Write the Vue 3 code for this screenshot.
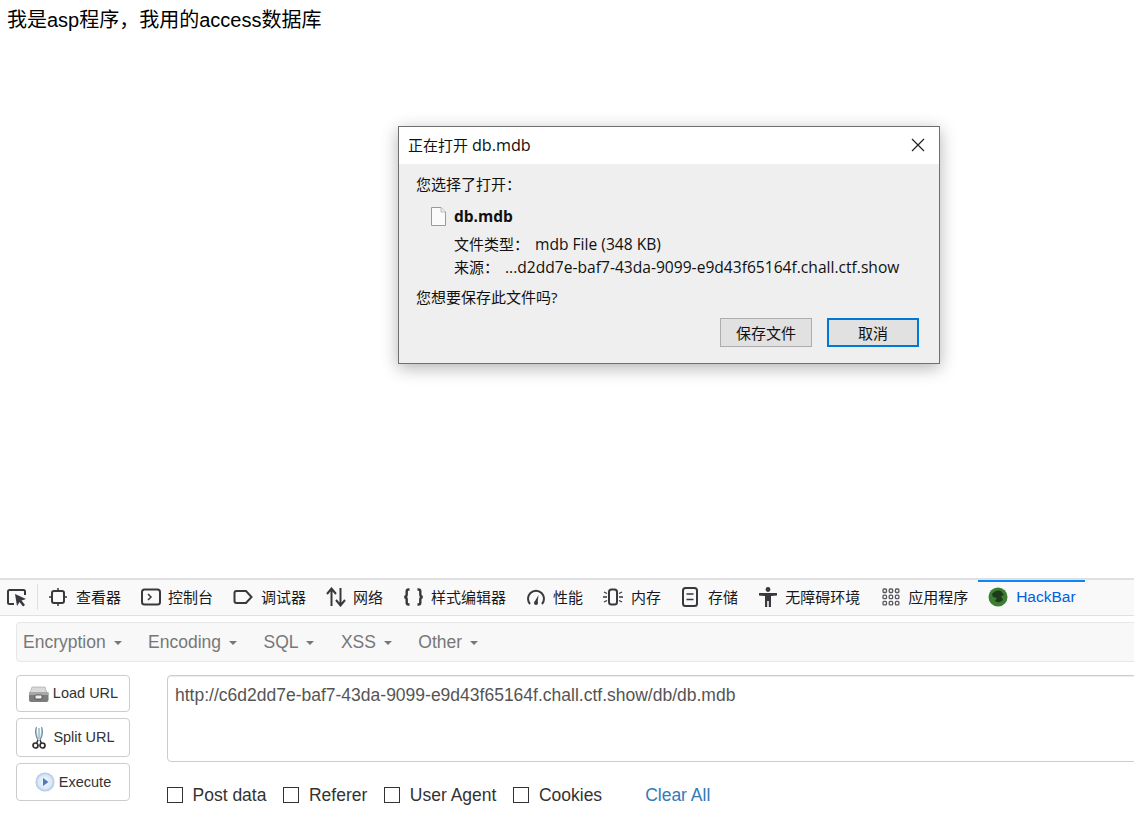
<script setup>
const menus = ['Encryption', 'Encoding', 'SQL', 'XSS', 'Other']
const checks = ['Post data', 'Referer', 'User Agent', 'Cookies']
</script>

<template>
  <div class="root">
    <main class="page">
      <p class="msg">我是asp程序，我用的access数据库</p>
      <section class="dialog">
        <header class="dlg-title">
          <span>正在打开 <span class="lat">db.mdb</span></span>
          <svg class="close" width="14" height="14" viewBox="0 0 14 14"><path d="M1 1L13 13M13 1L1 13" stroke="#222" stroke-width="1.2" fill="none"/></svg>
        </header>
        <div class="dlg-body">
          <div class="dlg-line">您选择了打开：</div>
          <div class="file-row">
            <svg class="file-ico" width="15" height="19" viewBox="0 0 15 19"><path d="M.5.5H10L14.500 5V18.500H.5Z" fill="#fafafa" stroke="#9a9a9a"/><path d="M10 .5V5H14.500" fill="#eee" stroke="#bbb"/></svg>
            <b>db.mdb</b>
          </div>
          <div class="meta"><span class="k1">文件类型：</span><span class="lat">mdb File (348 KB)</span></div>
          <div class="meta"><span class="k2">来源：</span><span class="lat">...d2dd7e-baf7-43da-9099-e9d43f65164f.chall.ctf.show</span></div>
          <div class="dlg-line ask">您想要保存此文件吗?</div>
          <div class="dlg-btns">
            <button class="dbtn">保存文件</button>
            <button class="dbtn primary">取消</button>
          </div>
        </div>
      </section>
    </main>

    <section class="devtools">
      <nav class="toolbar">
        <svg class="pick" width="22" height="20" viewBox="0 0 22 20"><path d="M8 17H3.500Q2 17 2 15.500V4.500Q2 3 3.500 3H17.500Q19 3 19 4.500V8" fill="none" stroke="#38383d" stroke-width="2"/><path d="M9 7L20 12L15.500 13.500L19 18L17 19.500L13.500 15L11 19Z" fill="#38383d"/></svg>
        <i class="sep"></i>
        <div class="tab t1">
          <svg width="18" height="18" viewBox="0 0 18 18"><rect x="3" y="3" width="12" height="12" rx="2" fill="none" stroke="#38383d" stroke-width="2"/><path d="M9 0V3M9 15V18M0 9H3M15 9H18" stroke="#38383d" stroke-width="1.500"/></svg>
          <span>查看器</span>
        </div>
        <div class="tab t2">
          <svg width="20" height="18" viewBox="0 0 20 18"><rect x="1" y="1.500" width="18" height="15" rx="2.500" fill="none" stroke="#38383d" stroke-width="2"/><path d="M7 6L10 9L7 12" fill="none" stroke="#38383d" stroke-width="1.500"/></svg>
          <span>控制台</span>
        </div>
        <div class="tab t3">
          <svg width="20" height="16" viewBox="0 0 20 16"><path d="M3.500 2H13L18.500 8L13 14H3.500Q1.500 14 1.500 12V4Q1.500 2 3.500 2Z" fill="none" stroke="#38383d" stroke-width="2"/></svg>
          <span>调试器</span>
        </div>
        <div class="tab t4">
          <svg width="20" height="20" viewBox="0 0 20 20"><path d="M5.500 19V2M1 7L5.500 1.500L10 7M14.500 1V18M10 13L14.500 18.500L19 13" fill="none" stroke="#38383d" stroke-width="2"/></svg>
          <span>网络</span>
        </div>
        <div class="tab t5">
          <svg width="21" height="18" viewBox="0 0 21 18"><path d="M6.500 1.500H5.500Q3.700 1.500 3.700 3.500V6.500Q3.700 8.500 1.500 9Q3.700 9.500 3.700 11.500V14.500Q3.700 16.500 5.500 16.500H6.500M14.500 1.500H15.500Q17.300 1.500 17.300 3.500V6.500Q17.300 8.500 19.500 9Q17.300 9.500 17.300 11.500V14.500Q17.300 16.500 15.500 16.500H14.500" fill="none" stroke="#38383d" stroke-width="2.400"/></svg>
          <span>样式编辑器</span>
        </div>
        <div class="tab t6">
          <svg width="20" height="18" viewBox="0 0 20 18"><path d="M4 16A8 8 0 1 1 16 16" fill="none" stroke="#38383d" stroke-width="2"/><path d="M8.500 14L12.500 7L11.500 15Z" fill="#38383d"/><circle cx="10" cy="15" r="2" fill="#38383d"/></svg>
          <span>性能</span>
        </div>
        <div class="tab t7">
          <svg width="20" height="18" viewBox="0 0 20 18"><rect x="6" y="1.500" width="8" height="15" rx="2.500" fill="none" stroke="#38383d" stroke-width="2"/><path d="M1 4L4 5.500M0 9H4M1 14L4 12.500M19 4L16 5.500M20 9H16M19 14L16 12.500" stroke="#38383d" stroke-width="1.300"/></svg>
          <span>内存</span>
        </div>
        <div class="tab t8">
          <svg width="16" height="20" viewBox="0 0 16 20"><rect x="1" y="1" width="14" height="18" rx="2.500" fill="none" stroke="#38383d" stroke-width="2"/><path d="M4.500 7H11.500M4.500 12.500H11.500" stroke="#38383d" stroke-width="1.700"/></svg>
          <span>存储</span>
        </div>
        <div class="tab t9">
          <svg width="18" height="20" viewBox="0 0 18 20"><circle cx="9" cy="2.500" r="2.400" fill="#38383d"/><path d="M0 6H18V8.500L12 9V20H9.800V14H8.200V20H6V9L0 8.500Z" fill="#38383d"/></svg>
          <span>无障碍环境</span>
        </div>
        <div class="tab t10">
          <svg width="18" height="18" viewBox="0 0 18 18"><g fill="none" stroke="#5a5a5e" stroke-width="1.300"><rect x="1" y="1" width="3.500" height="3.500" rx="1"/><rect x="7.200" y="1" width="3.500" height="3.500" rx="1"/><rect x="13.400" y="1" width="3.500" height="3.500" rx="1"/><rect x="1" y="7.200" width="3.500" height="3.500" rx="1"/><rect x="7.200" y="7.200" width="3.500" height="3.500" rx="1"/><rect x="13.400" y="7.200" width="3.500" height="3.500" rx="1"/><rect x="1" y="13.400" width="3.500" height="3.500" rx="1"/><rect x="7.200" y="13.400" width="3.500" height="3.500" rx="1"/><rect x="13.400" y="13.400" width="3.500" height="3.500" rx="1"/></g></svg>
          <span>应用程序</span>
        </div>
        <div class="tab hack">
          <svg width="20" height="20" viewBox="0 0 20 20"><circle cx="10" cy="10" r="9.500" fill="#3c7d33"/><path d="M4 7Q8 2 13 4L16 8L13 9L15 13Q11 17 7 14L9 11L5 10Z" fill="#1d3a1a"/></svg>
          <span>HackBar</span>
        </div>
      </nav>

      <div class="hackbar">
        <div class="navbar">
          <span v-for="m in menus" :key="m" class="menu">{{ m }}<i class="caret"></i></span>
        </div>
        <div class="work">
          <div class="actions">
            <button class="act load">
              <svg width="21" height="18" viewBox="0 0 21 18"><path d="M4 2H17L19 8H2Z" fill="#d9d9d9" stroke="#aaa" stroke-width=".7"/><rect x="1" y="7" width="19.500" height="10" rx="2" fill="#7c7c7c"/><rect x="1" y="7" width="19.500" height="3" fill="#a8a8a8"/><rect x="7" y="10" width="7" height="4" rx="1" fill="#eee" stroke="#444" stroke-width=".8"/></svg>
              <span>Load URL</span>
            </button>
            <button class="act split">
              <svg width="14" height="24" viewBox="0 0 14 24"><path d="M4.500 1Q2 7 6 14M9.500 1Q12 7 8 14" fill="#a9cfdf" stroke="#6f93a4" stroke-width="1.200"/><path d="M7 2V13" stroke="#6f93a4"/><circle cx="3.500" cy="19.500" r="2.500" fill="none" stroke="#2f2f2f" stroke-width="1.700"/><circle cx="10.500" cy="19.500" r="2.500" fill="none" stroke="#2f2f2f" stroke-width="1.700"/><path d="M6 14L4.500 17.500M8 14L9.500 17.500" stroke="#2f2f2f" stroke-width="1.500"/></svg>
              <span>Split URL</span>
            </button>
            <button class="act exec">
              <svg width="20" height="20" viewBox="0 0 20 20"><defs><radialGradient id="ex" cx=".5" cy=".5" r=".5"><stop offset="0" stop-color="#f4f8fd"/><stop offset=".7" stop-color="#dce8f6"/><stop offset="1" stop-color="#a8c4e4"/></radialGradient></defs><circle cx="10" cy="10" r="9.500" fill="url(#ex)"/><path d="M8 6L13.500 10L8 14Z" fill="#4b7db8"/></svg>
              <span>Execute</span>
            </button>
          </div>
          <div class="inputs">
            <div class="url">http://c6d2dd7e-baf7-43da-9099-e9d43f65164f.chall.ctf.show/db/db.mdb</div>
            <div class="checks">
              <label v-for="c in checks" :key="c" class="check"><i class="box"></i>{{ c }}</label>
              <a class="clear">Clear All</a>
            </div>
          </div>
        </div>
      </div>
    </section>
  </div>
</template>

<style>
html, body { margin: 0; padding: 0; background: #fff; overflow: hidden; }
</style>

<style scoped>
.root {
  width: 1134px;
  height: 822px;
  display: flex;
  flex-direction: column;
  overflow: hidden;
  font-family: "Liberation Sans", "Noto Sans CJK SC", sans-serif;
}
.page { position: relative; flex: 1; }
.msg { margin: 0; padding: 9px 7px; font-size: 20px; line-height: 23px; color: #000; }

.dialog {
  position: absolute;
  left: 398px;
  top: 126px;
  width: 540px;
  height: 236px;
  border: 1px solid #6f6f6f;
  background: #efefef;
  box-shadow: 0 4px 16px rgba(0, 0, 0, .3);
  font-family: "Open Sans", "Noto Sans CJK SC", sans-serif;
  font-size: 15px;
  color: #111;
}
.lat { font-size: 15.600px; }
.dlg-title {
  height: 37px;
  box-sizing: border-box;
  padding: 0 9px 2px;
  background: #fff;
  display: flex;
  align-items: center;
  justify-content: space-between;
}
.dlg-title .lat { font-size: 16.200px; }
.close { margin-right: 5px; }
.dlg-body { padding: 10px 20px 0 17px; }
.dlg-line { height: 20px; line-height: 20px; }
.file-row {
  display: flex;
  align-items: center;
  gap: 8px;
  margin: 12px 0 0 15px;
  height: 20px;
  font-size: 15.500px;
}
.file-row b { font-weight: 700; }
.meta { margin: 0 0 0 38px; height: 23px; line-height: 23px; display: flex; }
.file-row + .meta { margin-top: 7px; }
.k1 { width: 81px; }
.k2 { width: 51px; }
.ask { margin-top: 8px; }
.dlg-btns { display: flex; justify-content: flex-end; gap: 15px; margin-top: 11px; }
.dbtn {
  width: 92px;
  height: 29px;
  padding: 0;
  background: #e1e1e1;
  border: 1px solid #adadad;
  font: inherit;
  color: #111;
}
.dbtn.primary { border: 2px solid #0078d7; }

.devtools { height: 244px; flex: none; background: #fff; }
.toolbar {
  height: 34px;
  padding-bottom: 1px;
  border-top: 2px solid #e0e0e2;
  border-bottom: 1px solid #e0e0e2;
  background: #f9f9fa;
  display: flex;
  align-items: center;
  font-size: 15px;
  color: #18181a;
}
.pick { margin-left: 6px; flex: none; }
.sep { width: 1px; height: 26px; background: #e0e0e2; margin: 0 11px 0 9px; flex: none; }
.tab { display: flex; align-items: center; flex: none; white-space: nowrap; }
.tab svg { flex: none; }
.tab span { margin-bottom: 2px; }
.t1 { gap: 9px; }
.t2 { gap: 7px; margin-left: 20px; }
.t3 { gap: 8px; margin-left: 20px; }
.t4 { gap: 7px; margin-left: 20px; }
.t5 { gap: 7px; margin-left: 20px; }
.t6 { gap: 7px; margin-left: 20px; }
.t7 { gap: 8px; margin-left: 20px; }
.t8 { gap: 10px; margin-left: 21px; }
.t9 { gap: 8px; margin-left: 21px; }
.t10 { gap: 8px; margin-left: 22px; }
.hack {
  margin-left: 10px;
  align-self: stretch;
  margin-bottom: -1px;
  padding: 0 10px 3px;
  gap: 8px;
  border-top: 2px solid #0a84ff;
  box-sizing: border-box;
  color: #0060df;
  width: 107px;
  font-size: 15.500px;
}
.hack span { margin-bottom: 0; }

.hackbar { padding: 6px 0 0 16px; }
.navbar {
  width: 1130px;
  height: 38px;
  border: 1px solid #e7e7e7;
  border-radius: 4px;
  background: #f8f8f8;
  display: flex;
  align-items: center;
  gap: 26.400px;
  padding-left: 6px;
  color: #777;
  font-size: 17.500px;
}
.menu { display: flex; align-items: center; }
.caret {
  margin-left: 8px;
  margin-top: 2px;
  border-top: 4px solid #777;
  border-left: 4px solid transparent;
  border-right: 4px solid transparent;
}
.work { display: flex; gap: 37px; margin-top: 13px; }
.actions { width: 114px; display: flex; flex-direction: column; gap: 6px; flex: none; }
.act {
  height: 38px;
  padding: 0;
  background: #fff;
  border: 1px solid #ccc;
  border-radius: 4px;
  display: flex;
  align-items: center;
  justify-content: center;
  gap: 4px;
  font: 14.500px "Liberation Sans", sans-serif;
  color: #333;
}
.act.load { height: 37px; }
.act.load span { margin-top: -1px; }
.act.split { height: 39px; gap: 7px; padding-left: 1px; }
.act.split span { margin-top: -2px; }
.act.exec span { margin-top: -1px; }
.inputs { width: 1000px; flex: none; }
.url {
  height: 85px;
  box-sizing: content-box;
  border: 1px solid #ccc;
  border-radius: 4px;
  padding: 0 7px;
  font-size: 17.500px;
  line-height: 39px;
  color: #555;
  box-shadow: inset 0 1px 1px rgba(0, 0, 0, .075);
}
.checks {
  display: flex;
  align-items: center;
  margin-top: 23px;
  font-size: 17.500px;
  color: #333;
  height: 20px;
}
.check { display: flex; align-items: center; margin-right: 17px; }
.box { width: 14px; height: 14px; border: 1px solid #333; margin-right: 9.500px; flex: none; }
.clear { margin-left: 26px; color: #337ab7; }
</style>
